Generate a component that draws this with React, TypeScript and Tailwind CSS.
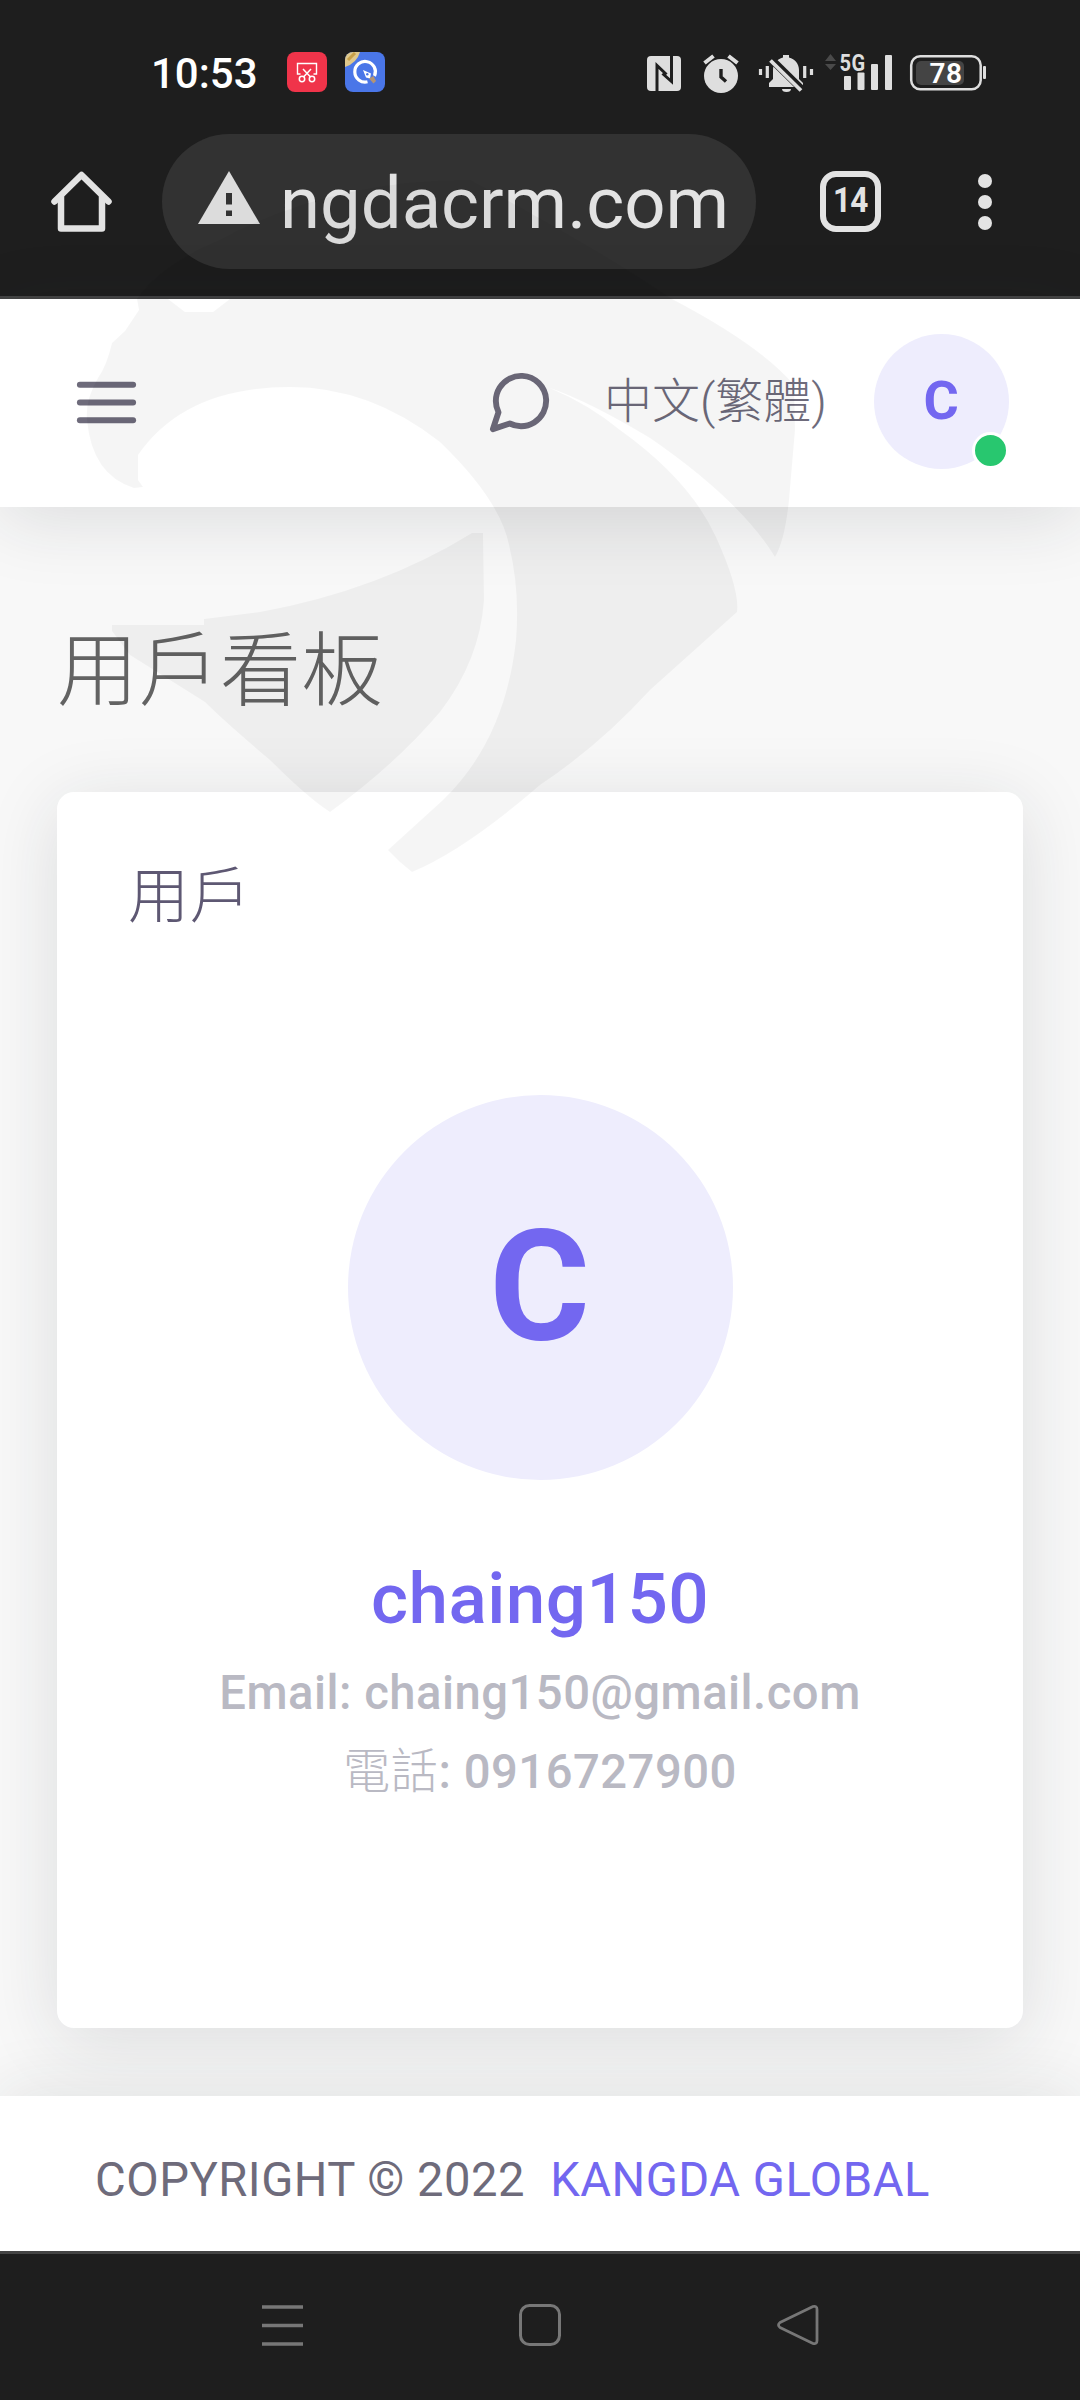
import { FiMenu, FiMessageCircle } from "react-icons/fi"

function NotificationIcons() {
  return (
    <div className="ml-[31px] flex gap-[18px]">
      <svg width="40" height="40" viewBox="0 0 40 40" fill="none">
        <rect width="40" height="40" rx="8" fill="#f0344a" />
        <path d="M13.500 22H10.500V11.500H29.500V22H26.500" stroke="#fff" strokeWidth="1.400" />
        <path d="M16 17l7.500 8M24 17l-7.500 8" stroke="#fff" strokeWidth="1.500" />
        <circle cx="15" cy="27" r="2.700" stroke="#fff" strokeWidth="1.500" />
        <circle cx="25" cy="27" r="2.700" stroke="#fff" strokeWidth="1.500" />
      </svg>
      <svg width="40" height="40" viewBox="0 0 40 40" fill="none">
        <defs>
          <clipPath id="app">
            <rect width="40" height="40" rx="8" />
          </clipPath>
        </defs>
        <g clipPath="url(#app)">
          <rect width="40" height="40" fill="#4a76e8" />
          <path d="M0 0H15Q12 11 0 15Z" fill="#dfc88c" />
          <path d="M3 8L10 1" stroke="#c79f48" strokeWidth="3" />
          <path d="M22.500 29.800A10.300 10.300 0 1 1 29.500 24" stroke="#fff" strokeWidth="3.200" />
          <path d="M18 18l8 3.500-1 5-4-1z" fill="#fff" />
          <circle cx="22.300" cy="22.300" r="1.200" fill="#4a76e8" />
          <path d="M24 26.500l4.500-2.500 2.500 5-2.500 2.500z" fill="#b39474" />
        </g>
      </svg>
    </div>
  )
}

function StatusIcons() {
  return (
    <svg width="344" height="44" viewBox="645 50 344 44" fill="#dedede">
      {/* nfc */}
      <rect x="647" y="56" width="34" height="35" rx="4" />
      <path d="M657 91V65.500l9.500 9M671.500 56v25.500l-9-8" fill="none" stroke="#1e1e1e" strokeWidth="3" />
      {/* alarm */}
      <circle cx="721" cy="76" r="17" />
      <path d="M704.500 63l9-7M737.500 63l-9-7" stroke="#dedede" strokeWidth="4" />
      <path d="M721 69v8l5 4.500" fill="none" stroke="#1e1e1e" strokeWidth="3.400" />
      {/* muted bell */}
      <path d="M769 87v-4l4-4v-9c0-6 4-11 10-12.500V55h6v2.500c6 1.500 10 6.500 10 12.500v9l4 4v4z" />
      <path d="M782 89h9a4.500 3 0 0 1-9 0z" />
      <path d="M770 58l34 33.500" stroke="#1e1e1e" strokeWidth="7.500" />
      <path d="M770.500 60.500l30.500 30" stroke="#dedede" strokeWidth="3.800" />
      <path d="M767.300 66v12M804.700 66v12" stroke="#dedede" strokeWidth="3.200" />
      <path d="M760.500 69v6M811.500 69v6" stroke="#dedede" strokeWidth="3.200" />
      {/* signal */}
      <path d="M825 61l5.500-7 5.500 7zM825 64h11l-5.500 6z" fill="#4a4a4a" />
      <text x="839.500" y="70.500" fontSize="24" fontWeight="700" textLength="26" lengthAdjust="spacingAndGlyphs" fontFamily="Roboto, sans-serif">5G</text>
      <rect x="844" y="76" width="7" height="14" rx="1" />
      <rect x="857.500" y="72.500" width="7" height="17.500" rx="1" />
      <rect x="871" y="64" width="7" height="26" rx="1" />
      <rect x="885" y="55" width="7" height="35" rx="1" />
      {/* battery */}
      <rect x="916" y="61" width="48" height="24" rx="5" fill="#444" />
      <rect x="911.200" y="56.200" width="69.500" height="33" rx="9" fill="none" stroke="#dedede" strokeWidth="2.500" />
      <rect x="983" y="66" width="3" height="13" rx="1" />
      <text x="946" y="82.500" fontSize="28" fontWeight="600" textAnchor="middle" fill="#fff" fontFamily="Roboto, sans-serif">78</text>
    </svg>
  )
}

function StatusBar() {
  return (
    <div className="flex h-[118px] items-center justify-between pt-[26px] pr-[91px] pl-[151px]">
      <div className="flex items-center">
        <span className="w-[105px] pt-[3px] text-[42px] leading-none font-medium tracking-normal text-white">10:53</span>
        <NotificationIcons />
      </div>
      <StatusIcons />
    </div>
  )
}

function BrowserBar() {
  return (
    <div className="flex h-[181px] items-center border-b-[3px] border-[#444] pb-[11px] pl-[51px]">
      <svg width="61" height="61" viewBox="0 0 61 61" fill="none" stroke="#e3e3e3" strokeWidth="6.500" strokeLinecap="round" strokeLinejoin="round">
        <path d="M3.500 30.500L30.500 4l27 26.500" />
        <path d="M10 26v31.500h41V26" />
      </svg>
      <div className="ml-[50px] flex h-[135px] w-[594px] items-center rounded-full bg-[#323232] pl-[36px]">
        <svg width="62" height="53" viewBox="0 0 62 53" className="mb-[8px] shrink-0">
          <path d="M31 0l31 53H0z" fill="#dcdcdc" />
          <path d="M28 22h6v11.500h-6zM28 39.500h6v5.500h-6z" fill="#323232" />
        </svg>
        <span className="ml-[20px] pt-[5px] text-[72.500px] leading-[100px] tracking-normal text-[#e3e3e3]">ngdacrm.com</span>
      </div>
      <div className="ml-[64px] flex size-[61px] items-center justify-center rounded-[16px] border-[6.500px] border-[#e3e3e3] text-[35px] font-bold tracking-tight text-[#e3e3e3]">
        <span className="scale-x-90">14</span>
      </div>
      <div className="ml-[97px] flex flex-col gap-[7px]">
        <span className="size-[14px] rounded-full bg-[#e3e3e3]" />
        <span className="size-[14px] rounded-full bg-[#e3e3e3]" />
        <span className="size-[14px] rounded-full bg-[#e3e3e3]" />
      </div>
    </div>
  )
}

function Navbar() {
  return (
    <header className="relative z-10 flex h-[208px] items-center bg-white pr-[71px] pb-[3px] pl-[71px] text-[#6e6b7b] shadow-[0_12px_72px_rgba(34,41,47,0.13)]">
      <FiMenu size={71} className="mt-[2px]" />
      <FiMessageCircle size={71} className="mt-[2px] ml-auto" />
      <span className="ml-[49px] text-[48px] leading-none font-light tracking-normal whitespace-nowrap">中文(繁體)</span>
      <div className="relative ml-[47px] flex size-[135px] items-center justify-center rounded-full bg-[#eeedfd] pb-[3px] text-[54px] font-bold text-[#7367f0]">
        C
        <span className="absolute right-0 bottom-0 size-[37px] rounded-full border-[3px] border-white bg-[#28c76f]" />
      </div>
    </header>
  )
}

function UserCard() {
  return (
    <section className="h-[1236px] rounded-[17px] bg-white px-[71px] pt-[64px] shadow-[0_12px_72px_rgba(34,41,47,0.13)]">
      <h2 className="text-[61px] leading-[82px] font-light text-[#5e5873]">用戶</h2>
      <div className="mt-[157px] flex flex-col items-center">
        <div className="flex size-[385px] items-center justify-center rounded-full bg-[#eeedfd] text-[154px] font-bold text-[#7367f0]">
          C
        </div>
        <h3 className="mt-[78px] text-[71px] leading-[82px] font-medium text-[#7367f0]">chaing150</h3>
        <p className="mt-[14px] text-[47.200px] leading-[79px] font-medium text-[#b9b9c3]">Email: chaing150@gmail.com</p>
        <p className="text-[47.200px] leading-[79px] font-medium text-[#b9b9c3]">
          <span className="font-light">電話</span>: 0916727900
        </p>
      </div>
    </section>
  )
}

function Footer() {
  return (
    <footer className="relative flex h-[155px] items-center gap-[25px] bg-white pt-[13px] pl-[95px] text-[47.200px] text-[#6e6b7b] shadow-[0_-10px_60px_rgba(34,41,47,0.09)]">
      <span>COPYRIGHT © 2022</span>
      <a className="text-[#7367f0]">KANGDA GLOBAL</a>
    </footer>
  )
}

function SystemNav() {
  return (
    <nav className="relative flex h-[149px] justify-between border-t-[3px] border-[#444] bg-[#1e1e1e] px-[261px] pt-[50px]">
      <svg width="42" height="42" viewBox="0 0 42 42" stroke="#777" strokeWidth="3.500">
        <path d="M1 3h41M1 21.500h41M1 40h41" />
      </svg>
      <svg width="42" height="42" viewBox="0 0 42 42" fill="none" stroke="#777" strokeWidth="3">
        <rect x="1.500" y="1.500" width="39" height="39" rx="9" />
      </svg>
      <svg width="42" height="42" viewBox="0 0 42 42" fill="none" stroke="#777" strokeWidth="2.800" strokeLinejoin="round">
        <path d="M36 2.500L3 18.500q-3 2.500 0 5L36 39.500q4 1 4-3v-31q0-4-4-3z" />
      </svg>
    </nav>
  )
}

function Watermark() {
  return (
    <svg className="pointer-events-none absolute inset-0 z-20" width="1080" height="2400" viewBox="0 0 1080 2400" fill="#000" fillOpacity="0.04">
      <path
        fillRule="evenodd"
        d="M137 299L139 310L125 331L112 343Q107 365 98 378Q85 400 87 420Q92 475 134 488L143 487L138 480V455Q185 387 290 387Q370 387 440 442Q500 500 509 545Q520 590 516 640Q505 740 443 800L388 850L400 862L412 872Q465 850 540 785Q600 745 650 690L737 612Q740 590 716 537Q690 480 620 430Q590 405 550 388Q590 402 650 438Q740 500 775 557Q785 540 789 500L795 430L794 385Q760 345 672 299Q600 250 470 180Q330 180 220 240Q160 265 137 299ZM168 299L185 312H213L230 299Z"
      />
      <path d="M472 533H483L484 600Q480 660 440 712Q395 765 330 812Q308 798 270 760Q225 722 205 702Q170 680 130 655L112 631V625H204V619L260 612Q380 590 472 533Z" />
    </svg>
  )
}

export default function App() {
  return (
    <div className="relative flex h-[2400px] w-[1080px] flex-col overflow-hidden bg-[#f8f8f8] font-[Roboto,'Noto_Sans_CJK_TC',sans-serif] tracking-[0.5px]">
      <div className="bg-[#1e1e1e]">
        <StatusBar />
        <BrowserBar />
      </div>
      <Navbar />
      <main className="h-[1589px] px-[57px] pt-[106px]">
        <h1 className="mb-[61px] text-[81px] leading-[118px] font-light text-[#636363]">用戶看板</h1>
        <UserCard />
      </main>
      <Footer />
      <SystemNav />
      <Watermark />
    </div>
  )
}
